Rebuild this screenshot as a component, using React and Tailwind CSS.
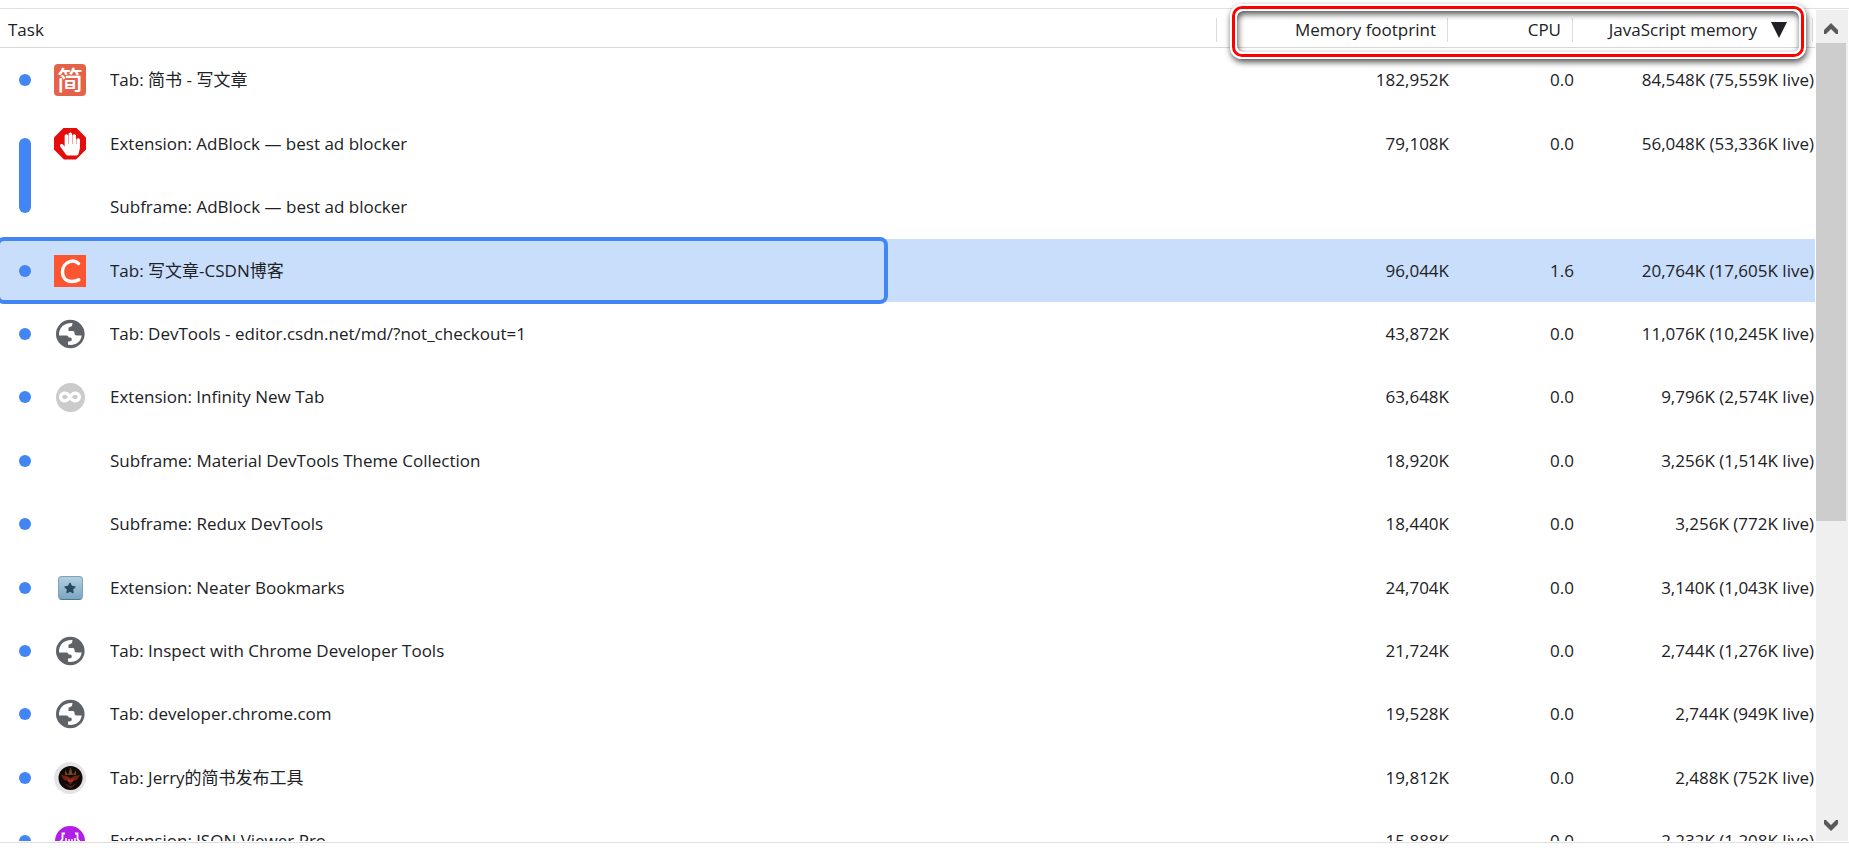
import React, { useState } from 'react';
import { FaHandPaper, FaInfinity, FaStar } from 'react-icons/fa';

const JianshuIcon = () => (
  <span className="flex h-8 w-8 items-center justify-center rounded-sm bg-[#e5624a] text-[26px] leading-8 font-medium text-white">简</span>
);

const AdBlockIcon = () => (
  <span className="flex h-8 w-8 items-center justify-center bg-[#e40d0d] [clip-path:polygon(31%_0,69%_0,100%_31%,100%_69%,69%_100%,31%_100%,0_69%,0_31%)]">
    <FaHandPaper className="h-6 w-5 text-white" />
  </span>
);

const CsdnIcon = () => (
  <svg viewBox="0 0 32 32" className="h-8 w-8">
    <path d="M0 0h32v32H0z" fill="#fc5531" />
    <path d="M24.500 8.500C22.500 6.500 19.500 5.500 16.500 6.300 11.500 7.500 8.500 12 8.500 17c0 6 4 9.500 9.300 9.500 3 0 5-.5 7-1.700" fill="none" stroke="#fff" strokeWidth="3.400" strokeLinecap="round" />
  </svg>
);

const GlobeIcon = () => (
  <svg viewBox="0 0 32 32" className="h-8 w-8">
    <circle cx="16.300" cy="16" r="14.300" fill="#5f6368" />
    <path d="M5 17.500C4.500 10 10 4.500 18.500 5L18 8l-3.500 1.700V13h4c1.600 0 2 .9 2 2.300 0 1.500.9 2.200 2.500 2.200h4.700c-.7 6.300-6 10.300-13.700 9.300v-3.300c2.500 0 3.800-.4 3.800-2s-1.100-1.900-3.100-1.900c-.2-1.500-1.200-2.100-2.900-2.100z" fill="#fff" />
  </svg>
);

const InfinityIcon = () => (
  <span className="mx-auto flex h-[29px] w-[29px] items-center justify-center rounded-full bg-[#cbcbcb]">
    <FaInfinity className="h-6 w-[22px] text-white" />
  </span>
);

const BookmarkIcon = () => (
  <span className="mx-auto flex h-6 w-[25px] items-center justify-center rounded-sm border border-[#7fa3ba] border-b-[#4f7790] bg-linear-to-b from-[#b4cfe0] to-[#7ba6c4]">
    <FaStar className="h-3 w-3 text-[#2b4a60]" />
  </span>
);

const JerryIcon = () => (
  <svg viewBox="0 0 32 32" className="h-8 w-8">
    <circle cx="16" cy="16" r="16" fill="#e4e4e4" />
    <circle cx="16.500" cy="16" r="12" fill="#120a08" />
    <path d="M16.500 5l2.500 8h-5zM11 8l3 5h-3zM22 8l-3 5h3z" fill="#6d4a20" />
    <path d="M7 13l6 1 3.500 2 3.500-2 6-1-3 5-4 1-2.500 4-2.500-4-4-1z" fill="#74200f" />
    <path d="M13 16l3.500 2 3.500-2-1.500 4h-4z" fill="#a83424" />
    <path d="M10 21l6.500 3 6.500-3-6.500 6z" fill="#4a2018" />
  </svg>
);

const JsonIcon = () => (
  <svg viewBox="0 0 32 32" className="h-8 w-8">
    <circle cx="16" cy="16" r="15" fill="#b01ee8" />
    <g fill="none" stroke="#fff" strokeWidth="1.800">
      <path d="M11 8.500H8.500V14L7 16l1.500 2v5.500H11M21 8.500h2.500V14l1.500 2-1.500 2v5.500H21" />
      <path d="M12 13v5M15 14v5M18 14v5M21 13v5" strokeWidth="1.500" />
    </g>
  </svg>
);

const tasks = [
  { name: 'Tab: 简书 - 写文章', icon: JianshuIcon, memory: '182,952K', cpu: '0.0', js: '84,548K (75,559K live)' },
  { name: 'Extension: AdBlock — best ad blocker', icon: AdBlockIcon, group: 'start', memory: '79,108K', cpu: '0.0', js: '56,048K (53,336K live)' },
  { name: 'Subframe: AdBlock — best ad blocker', group: 'end' },
  { name: 'Tab: 写文章-CSDN博客', icon: CsdnIcon, memory: '96,044K', cpu: '1.6', js: '20,764K (17,605K live)' },
  { name: 'Tab: DevTools - editor.csdn.net/md/?not_checkout=1', icon: GlobeIcon, memory: '43,872K', cpu: '0.0', js: '11,076K (10,245K live)' },
  { name: 'Extension: Infinity New Tab', icon: InfinityIcon, memory: '63,648K', cpu: '0.0', js: '9,796K (2,574K live)' },
  { name: 'Subframe: Material DevTools Theme Collection', memory: '18,920K', cpu: '0.0', js: '3,256K (1,514K live)' },
  { name: 'Subframe: Redux DevTools', memory: '18,440K', cpu: '0.0', js: '3,256K (772K live)' },
  { name: 'Extension: Neater Bookmarks', icon: BookmarkIcon, memory: '24,704K', cpu: '0.0', js: '3,140K (1,043K live)' },
  { name: 'Tab: Inspect with Chrome Developer Tools', icon: GlobeIcon, memory: '21,724K', cpu: '0.0', js: '2,744K (1,276K live)' },
  { name: 'Tab: developer.chrome.com', icon: GlobeIcon, memory: '19,528K', cpu: '0.0', js: '2,744K (949K live)' },
  { name: 'Tab: Jerry的简书发布工具', icon: JerryIcon, memory: '19,812K', cpu: '0.0', js: '2,488K (752K live)' },
  { name: 'Extension: JSON Viewer Pro', icon: JsonIcon, memory: '15,888K', cpu: '0.0', js: '2,232K (1,208K live)' },
];

const HeaderCell = ({ children, left, ...props }) => (
  <th scope="col" className="h-[39px] border-b border-[#d8d8d8] p-0 pt-1 pr-[2px] font-normal" {...props}>
    <button type="button" className={`flex h-6 w-full items-center border-r border-[#dcdcdc] ${left ? 'pl-2' : 'justify-end pr-[11px]'}`}>
      {children}
    </button>
  </th>
);

const TaskRow = ({ task, selected, onSelect }) => {
  const Icon = task.icon;

  return (
    <tr
      onClick={onSelect}
      aria-selected={selected}
      className={`relative h-[63px] nth-[5n+1]:h-16 nth-[5n+3]:h-16 ${selected ? 'bg-[#c9defb]' : ''}`}
    >
      {task.group !== 'end' && (
        <td rowSpan={task.group ? 2 : 1} className="p-0">
          <div className={`mx-auto w-3 rounded-full bg-[#4285f4] ${task.group ? 'h-[75px]' : 'h-3'}`} />
          {selected && (
            <div className="pointer-events-none absolute -top-[2px] -bottom-[2px] -left-1 w-[calc(49%+3px)] rounded-lg border-4 border-[#4285f4]" />
          )}
        </td>
      )}
      <td className="p-0 pl-[5px]">
        <div className="flex items-center gap-6">
          <span className="w-8 shrink-0">{Icon && <Icon />}</span>
          <span className="truncate">{task.name}</span>
        </div>
      </td>
      <td className="p-0 pr-px text-right">{task.memory}</td>
      <td className="p-0 pr-px text-right">{task.cpu}</td>
      <td className="p-0 pr-px text-right whitespace-nowrap">{task.js}</td>
    </tr>
  );
};

const ScrollBar = () => (
  <div className="mt-px mr-px ml-px flex w-8 shrink-0 flex-col bg-[#efefef]">
    <button type="button" aria-label="Scroll up" className="flex h-[33px] items-center justify-center pt-1 pr-[2px]">
      <svg viewBox="0 0 14 12" className="h-3 w-[14px]">
        <path d="M0 11V7l7-7 7 7v4h-2L7 6l-5 5z" fill="#5a5a5a" />
      </svg>
    </button>
    <div className="flex-1">
      <div className="h-5/8 w-[30px] bg-[#cdcdcd]" />
    </div>
    <button type="button" aria-label="Scroll down" className="flex h-[33px] items-center justify-center pr-[2px]">
      <svg viewBox="0 0 14 12" className="h-3 w-[14px]">
        <path d="M0 1v4l7 7 7-7V1h-2L7 6 2 1z" fill="#5a5a5a" />
      </svg>
    </button>
  </div>
);

const App = () => {
  const [selected, setSelected] = useState(3);

  return (
    <div className="flex h-screen flex-col bg-white pt-2 pb-[23px] font-['Open_Sans','Noto_Sans_CJK_SC',sans-serif] text-[17px] leading-6 text-[#202124]">
      <div className="relative flex min-h-0 flex-1 border-y border-[#e0e0e0] pb-px">
        <div className="min-w-0 flex-1 overflow-hidden">
          <table className="w-full table-fixed border-separate border-spacing-0">
            <colgroup>
              <col className="w-[49px]" />
              <col />
              <col className="w-[231px]" />
              <col className="w-[125px]" />
              <col className="w-[240px]" />
            </colgroup>
            <thead>
              <tr>
                <HeaderCell colSpan={2} left>Task</HeaderCell>
                <HeaderCell>Memory footprint</HeaderCell>
                <HeaderCell>CPU</HeaderCell>
                <HeaderCell aria-sort="descending">
                  <span className="flex items-center gap-[14px] pr-[14px]">
                    JavaScript memory
                    <svg viewBox="0 0 16 16" className="h-4 w-4">
                      <path d="M0 0h16L8 16z" fill="#202124" />
                    </svg>
                  </span>
                </HeaderCell>
              </tr>
            </thead>
            <tbody>
              {tasks.map((task, index) => (
                <TaskRow key={task.name} task={task} selected={index === selected} onSelect={() => setSelected(index)} />
              ))}
            </tbody>
          </table>
        </div>
        <ScrollBar />

        {/* highlight around the sortable memory columns */}
        <div className="pointer-events-none absolute -top-[5px] right-[43px] h-[55px] w-[576px] rounded-xl border-2 border-white shadow-[1px_3px_6px_rgba(0,0,0,0.7)]">
          <div className="h-full rounded-[10px] border-3 border-[#f00]">
            <div className="h-full rounded-lg border-2 border-white shadow-[inset_1px_3px_6px_rgba(0,0,0,0.7)]" />
          </div>
        </div>
      </div>
    </div>
  );
};

export default App;
